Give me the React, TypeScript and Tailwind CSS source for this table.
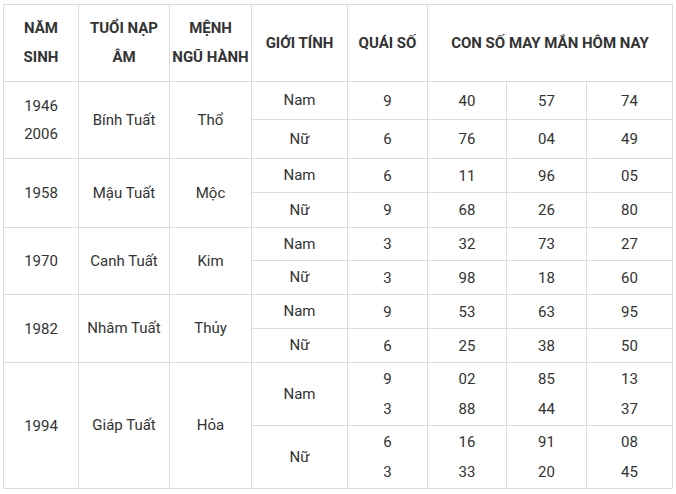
const rows = [
  {
    years: ["1946", "2006"],
    tuoi: "Bính Tuất",
    menh: "Thổ",
    h: [38, 39],
    data: [
      { g: "Nam", q: ["9"], n: [["40", "57", "74"]] },
      { g: "Nữ", q: ["6"], n: [["76", "04", "49"]] },
    ],
  },
  {
    years: ["1958"],
    tuoi: "Mậu Tuất",
    menh: "Mộc",
    h: [34, 35],
    data: [
      { g: "Nam", q: ["6"], n: [["11", "96", "05"]] },
      { g: "Nữ", q: ["9"], n: [["68", "26", "80"]] },
    ],
  },
  {
    years: ["1970"],
    tuoi: "Canh Tuất",
    menh: "Kim",
    h: [33, 34],
    data: [
      { g: "Nam", q: ["3"], n: [["32", "73", "27"]] },
      { g: "Nữ", q: ["3"], n: [["98", "18", "60"]] },
    ],
  },
  {
    years: ["1982"],
    tuoi: "Nhâm Tuất",
    menh: "Thủy",
    h: [34, 34],
    data: [
      { g: "Nam", q: ["9"], n: [["53", "63", "95"]] },
      { g: "Nữ", q: ["6"], n: [["25", "38", "50"]] },
    ],
  },
  {
    years: ["1994"],
    tuoi: "Giáp Tuất",
    menh: "Hỏa",
    h: [63, 63],
    data: [
      {
        g: "Nam",
        q: ["9", "3"],
        n: [
          ["02", "85", "13"],
          ["88", "44", "37"],
        ],
      },
      {
        g: "Nữ",
        q: ["6", "3"],
        n: [
          ["16", "91", "08"],
          ["33", "20", "45"],
        ],
      },
    ],
  },
];

const cell = "border border-[#dcdcdc] text-center align-middle p-0";

const Lines = ({ items }: { items: string[] }) => (
  <div className="flex flex-col items-center leading-[30px]">
    {items.map((t, i) => (
      <span key={i}>{t}</span>
    ))}
  </div>
);

export default function App() {
  return (
    <div className="w-[676px] h-[494px] bg-white pt-[4px] pl-[3px] font-['Roboto','Liberation_Sans',sans-serif] text-[15px] text-[#333]">
      <table className="table-fixed border-collapse w-[669px]">
        <colgroup>
          <col className="w-[75px]" />
          <col className="w-[91px]" />
          <col className="w-[82px]" />
          <col className="w-[96px]" />
          <col className="w-[80px]" />
          <col className="w-[79px]" />
          <col className="w-[80px]" />
          <col className="w-[86px]" />
        </colgroup>
        <thead>
          <tr className="h-[77px] font-bold leading-[29px]">
            <th className={cell}>
              NĂM
              <br />
              SINH
            </th>
            <th className={cell}>
              TUỔI NẠP
              <br />
              ÂM
            </th>
            <th className={cell}>
              MỆNH
              <br />
              NGŨ HÀNH
            </th>
            <th className={cell}>GIỚI TÍNH</th>
            <th className={cell}>QUÁI SỐ</th>
            <th className={cell} colSpan={3}>
              CON SỐ MAY MẮN HÔM NAY
            </th>
          </tr>
        </thead>
        <tbody>
          {rows.map((r) =>
            r.data.map((d, i) => (
              <tr key={r.tuoi + i} style={{ height: r.h[i] }}>
                {i === 0 && (
                  <>
                    <td className={cell} rowSpan={2}>
                      <div className="flex flex-col items-center leading-[28px]">
                        {r.years.map((y) => (
                          <span key={y}>{y}</span>
                        ))}
                      </div>
                    </td>
                    <td className={cell} rowSpan={2}>
                      {r.tuoi}
                    </td>
                    <td className={cell} rowSpan={2}>
                      {r.menh}
                    </td>
                  </>
                )}
                <td className={cell}>{d.g}</td>
                <td className={cell}>
                  <Lines items={d.q} />
                </td>
                {[0, 1, 2].map((c) => (
                  <td key={c} className={cell}>
                    <Lines items={d.n.map((line) => line[c])} />
                  </td>
                ))}
              </tr>
            ))
          )}
        </tbody>
      </table>
    </div>
  );
}
